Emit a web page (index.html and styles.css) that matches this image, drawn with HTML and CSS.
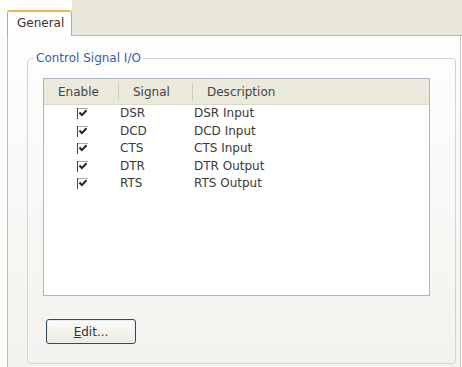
FILE: index.html
```html
<!DOCTYPE html>
<html lang="en">
<head>
    <meta charset="UTF-8">
    <title>Control Signal I/O</title>
    <link rel="stylesheet" href="styles.css">
</head>
<body>
    <div class="tabs">
        <div class="tab active">General</div>
        <div class="tab-fill"></div>
    </div>

    <div class="panel">
        <fieldset class="group">
            <legend>Control Signal I/O</legend>

            <div class="list">
                <div class="list-head">
                    <div class="col col-enable">Enable</div>
                    <div class="col col-signal">Signal</div>
                    <div class="col col-desc">Description</div>
                </div>

                <div class="row">
                    <div class="cell col-enable"><span class="check"><svg width="11" height="11" viewBox="0 0 11 11"><path d="M0.5 0v11" stroke="#444"/><path d="M1 0.5h10" stroke="#aaa"/><path d="M2.5 4.5l2.4 2.6l4.6-4.8" stroke="#222" stroke-width="2" fill="none"/></svg></span></div>
                    <div class="cell col-signal">DSR</div>
                    <div class="cell col-desc">DSR Input</div>
                </div>
                <div class="row">
                    <div class="cell col-enable"><span class="check"><svg width="11" height="11" viewBox="0 0 11 11"><path d="M0.5 0v11" stroke="#444"/><path d="M1 0.5h10" stroke="#aaa"/><path d="M2.5 4.5l2.4 2.6l4.6-4.8" stroke="#222" stroke-width="2" fill="none"/></svg></span></div>
                    <div class="cell col-signal">DCD</div>
                    <div class="cell col-desc">DCD Input</div>
                </div>
                <div class="row">
                    <div class="cell col-enable"><span class="check"><svg width="11" height="11" viewBox="0 0 11 11"><path d="M0.5 0v11" stroke="#444"/><path d="M1 0.5h10" stroke="#aaa"/><path d="M2.5 4.5l2.4 2.6l4.6-4.8" stroke="#222" stroke-width="2" fill="none"/></svg></span></div>
                    <div class="cell col-signal">CTS</div>
                    <div class="cell col-desc">CTS Input</div>
                </div>
                <div class="row">
                    <div class="cell col-enable"><span class="check"><svg width="11" height="11" viewBox="0 0 11 11"><path d="M0.5 0v11" stroke="#444"/><path d="M1 0.5h10" stroke="#aaa"/><path d="M2.5 4.5l2.4 2.6l4.6-4.8" stroke="#222" stroke-width="2" fill="none"/></svg></span></div>
                    <div class="cell col-signal">DTR</div>
                    <div class="cell col-desc">DTR Output</div>
                </div>
                <div class="row">
                    <div class="cell col-enable"><span class="check"><svg width="11" height="11" viewBox="0 0 11 11"><path d="M0.5 0v11" stroke="#444"/><path d="M1 0.5h10" stroke="#aaa"/><path d="M2.5 4.5l2.4 2.6l4.6-4.8" stroke="#222" stroke-width="2" fill="none"/></svg></span></div>
                    <div class="cell col-signal">RTS</div>
                    <div class="cell col-desc">RTS Output</div>
                </div>
            </div>

            <button class="btn"><u>E</u>dit...</button>
        </fieldset>
    </div>
</body>
</html>
```

FILE: styles.css
```css
body {
    margin: 0;
    width: 462px;
    height: 367px;
    overflow: hidden;
    background: #fdfdfb;
    font-family: "DejaVu Sans", Verdana, sans-serif;
    font-size: 12px;
    line-height: 14px;
    color: #3a3a3a;
}
.tabs {
    display: flex;
    height: 36px;
}
.tab {
    box-sizing: border-box;
    margin: 10px 0 0 7px;
    width: 65px;
    height: 26px;
    padding: 4px 0 0 9px;
    background: #fff;
    border: 1px solid #a9afb1;
    border-top: 2px solid #efb552;
    border-bottom: none;
    border-radius: 3px 3px 0 0;
    color: #333;
}
.tab-fill {
    flex: 1;
    background: #e9e7d9;
    border-bottom: 1px solid #b3b7b5;
}
.panel {
    box-sizing: border-box;
    margin-left: 7px;
    width: 454px;
    height: 331px;
    padding: 15px 0 0 19px;
    border-left: 1px solid #b8bcbc;
    border-right: 1px solid #c4c8c8;
    background: linear-gradient(#fefefe, #f4f2ee);
}
.group {
    box-sizing: border-box;
    margin: 0;
    width: 429px;
    height: 313px;
    padding: 13px 0 0 15px;
    border: 1px solid #d6d3c8;
    border-radius: 4px;
}
.group legend {
    margin-left: -9px;
    padding: 0 2px;
    color: #3b5fa6;
}
.list {
    box-sizing: border-box;
    width: 387px;
    height: 218px;
    border: 1px solid #aab6c2;
    background: #fff;
}
.list-head {
    display: flex;
    height: 25px;
    background: #ebeadd;
    border-bottom: 1px solid #dcd9cb;
    color: #444;
}
.list-head .col {
    box-sizing: border-box;
    padding: 6px 0 0 14px;
}
.list-head .col-signal,
.list-head .col-desc {
    border-left: 1px solid #cfcbbc;
    margin: 4px 0;
    padding-top: 2px;
}
.col-enable {
    width: 74px;
}
.col-signal {
    width: 74px;
}
.col-desc {
    flex: 1;
}
.row {
    display: flex;
    height: 17.5px;
    line-height: 17.5px;
}
.row .cell {
    box-sizing: border-box;
}
.row .col-signal,
.row .col-desc {
    padding-left: 2px;
}
.row .col-enable {
    display: flex;
    align-items: center;
    padding-left: 33px;
}
.check svg {
    display: block;
}
.btn {
    display: block;
    box-sizing: border-box;
    margin: 23px 0 0 3px;
    width: 90px;
    height: 25px;
    padding: 0;
    border: 1px solid #34495f;
    border-radius: 3px;
    background: linear-gradient(#fbfbf8, #eceae2);
    box-shadow: inset 0 0 0 1px #e4ecf2;
    font-family: inherit;
    font-size: 12px;
    color: #333;
}
```
